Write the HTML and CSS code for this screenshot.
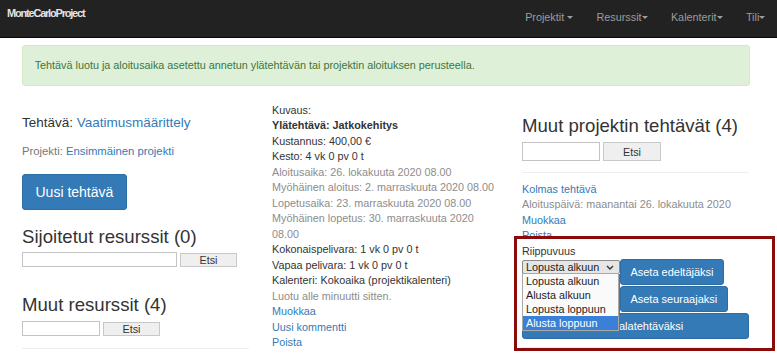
FILE: index.html
```html
<!DOCTYPE html>
<html lang="fi">
<head>
  <meta charset="UTF-8">
  <meta name="viewport" content="width=device-width, initial-scale=1.0">
  <title>Tehtävä: Vaatimusmäärittely</title>
  <link rel="stylesheet" href="styles.css">
</head>
<body>
  <nav class="navbar">
    <a class="brand" href="#">MonteCarloProject</a>
    <ul class="nav">
      <li><a href="#">Projektit <span class="caret"></span></a></li>
      <li><a href="#">Resurssit<span class="caret"></span></a></li>
      <li><a href="#">Kalenterit<span class="caret"></span></a></li>
      <li><a href="#">Tili<span class="caret"></span></a></li>
    </ul>
  </nav>

  <div class="container">
    <div class="alert">Tehtävä luotu ja aloitusaika asetettu annetun ylätehtävän tai projektin aloituksen perusteella.</div>

    <div class="row">
      <div class="col">
        <h4 class="task">Tehtävä: <a href="#">Vaatimusmäärittely</a></h4>
        <p class="project">Projekti: <a href="#">Ensimmäinen projekti</a></p>
        <button class="btn btn-primary btn-lg">Uusi tehtävä</button>

        <h3>Sijoitetut resurssit (0)</h3>
        <form class="search search-sm">
          <input type="text" class="wide">
          <button type="button">Etsi</button>
        </form>

        <h3>Muut resurssit (4)</h3>
        <form class="search search-sm">
          <input type="text">
          <button type="button">Etsi</button>
        </form>
        <hr class="end">
      </div>

      <div class="col details">
        <div>Kuvaus:</div>
        <div><b>Ylätehtävä: Jatkokehitys</b></div>
        <div>Kustannus: 400,00 €</div>
        <div>Kesto: 4 vk 0 pv 0 t</div>
        <div class="muted">Aloitusaika: 26. lokakuuta 2020 08.00</div>
        <div class="muted">Myöhäinen aloitus: 2. marraskuuta 2020 08.00</div>
        <div class="muted">Lopetusaika: 23. marraskuuta 2020 08.00</div>
        <div class="muted">Myöhäinen lopetus: 30. marraskuuta 2020 08.00</div>
        <div>Kokonaispelivara: 1 vk 0 pv 0 t</div>
        <div>Vapaa pelivara: 1 vk 0 pv 0 t</div>
        <div>Kalenteri: Kokoaika (projektikalenteri)</div>
        <div class="muted">Luotu alle minuutti sitten.</div>
        <div><a href="#">Muokkaa</a></div>
        <div><a href="#">Uusi kommentti</a></div>
        <div><a href="#">Poista</a></div>
      </div>

      <div class="col">
        <h3 class="tasks-title">Muut projektin tehtävät (4)</h3>
        <form class="search">
          <input type="text">
          <button type="button">Etsi</button>
        </form>
        <hr class="sep">

        <div class="other-task">
          <div><a href="#">Kolmas tehtävä</a></div>
          <div class="muted">Aloituspäivä: maanantai 26. lokakuuta 2020</div>
          <div><a href="#">Muokkaa</a></div>
          <div><a href="#">Poista</a></div>
        </div>

        <div class="dep">
          <span class="mark"></span>
          <div class="dep-label">Riippuvuus</div>
          <div class="dep-row">
            <select class="dep-select">
              <option>Lopusta alkuun</option>
              <option>Alusta alkuun</option>
              <option>Lopusta loppuun</option>
              <option>Alusta loppuun</option>
            </select>
            <button class="btn btn-primary">Aseta edeltäjäksi</button>
          </div>
          <div class="dep-row">
            <select class="dep-select covered">
              <option>Lopusta alkuun</option>
            </select>
            <button class="btn btn-primary">Aseta seuraajaksi</button>
          </div>
          <div class="dep-row">
            <button class="btn btn-primary btn-block">Aseta alatehtäväksi</button>
          </div>
          <ul class="dep-popup">
            <li>Lopusta alkuun</li>
            <li>Alusta alkuun</li>
            <li>Lopusta loppuun</li>
            <li class="active">Alusta loppuun</li>
          </ul>
          <hr>
        </div>
      </div>
    </div>
  </div>
</body>
</html>
```

FILE: styles.css
```css
html { overflow: hidden; }
body { margin: 0; font-family: "Liberation Sans", Arial, sans-serif; font-size: 10.8px; line-height: 15.5px; color: #333; background: #fff; }
a { color: #337ab7; text-decoration: none; }
hr { border: 0; border-top: 1px solid #eee; margin: 0; }

.navbar { display: flex; justify-content: space-between; height: 37px; background: #222; border-bottom: 1px solid #080808; }
.brand { padding: 6px 0 0 7px; color: #e2e2e2; font-size: 11px; font-weight: bold; letter-spacing: -1.2px; line-height: 15.6px; }
.nav { display: flex; margin: 0; padding: 0; list-style: none; }
.nav a { display: block; padding: 10px 11.7px 0; color: #9d9d9d; line-height: 15.6px; }
.caret { display: inline-block; vertical-align: middle; margin-top: -1px; border-top: 3px solid #9d9d9d; border-left: 3px solid transparent; border-right: 3px solid transparent; }

.container { padding: 7px 27px 0 22px; }
.alert { padding: 11.7px; background: #dff0d8; border: 1px solid #d6e9c6; border-radius: 3px; color: #3c763d; line-height: 15.6px; margin-bottom: 15.6px; }

.row { display: grid; grid-template-columns: 227px 227px 227px; column-gap: 23px; }
.col { min-width: 0; }

h3 { font-size: 18.6px; font-weight: normal; line-height: 20.5px; margin: 16.8px 0 0; }
.tasks-title { margin-top: 14px; }
.task { font-size: 13.5px; font-weight: normal; line-height: 14.85px; margin: 14.5px 0 0; }
.project { font-size: 11.3px; line-height: 15.6px; color: #777; margin: 13.4px 0 0; }

.btn { font-family: inherit; font-size: 11px; line-height: 15.7px; padding: 4.6px 9.4px; border: 1px solid transparent; border-radius: 3px; cursor: pointer; }
.btn-primary { background: #337ab7; border-color: #2e6da4; color: #fff; }
.btn-lg { font-size: 14px; line-height: 18.4px; padding: 7.8px 12.5px; margin-top: 14px; }
.btn-block { display: block; width: 100%; }

.search { display: flex; align-items: center; gap: 3px; margin: 6px 0 0; }
.search input { width: 78px; height: 19px; box-sizing: border-box; border: 1px solid #c3c3c3; padding: 0 3px; font: inherit; }
.search button { width: 58px; height: 19px; box-sizing: border-box; background: #efefef; border: 1px solid #c8c8c8; font-family: inherit; font-size: 10.8px; color: #333; padding: 0; }
.search-sm { margin: 5.2px 0 28px; }
.search-sm input { height: 15px; }
.search-sm input.wide { width: 155px; }
.search-sm button { height: 14px; width: 57px; line-height: 12px; }
.end { margin-top: -16.5px; }

.details { padding-top: 1px; }
.muted { color: #8c8c8c; }

.sep { margin: 10.5px 0 9px; }

.dep { position: relative; }
.dep-label { color: #333; }
.dep-row { display: flex; align-items: flex-start; margin-bottom: 1px; }
.dep-select { appearance: none; -webkit-appearance: none; width: 98px; height: 14px; margin-top: 1px; box-sizing: border-box; padding: 0 0 0 3px; font-family: inherit; font-size: 10.8px; line-height: 12px; color: #222; background: #e6e6e6 url("data:image/svg+xml;utf8,<svg xmlns='http://www.w3.org/2000/svg' width='8' height='5'><path d='M1 1l3 3 3-3' fill='none' stroke='%23333' stroke-width='1.4'/></svg>") no-repeat right 5px center; border: 1px solid #8a8a8a; border-radius: 2px; }
.dep-select.covered { visibility: hidden; }
.dep .btn { height: 26px; }
.dep hr { margin-top: 7.8px; }

.dep-popup { position: absolute; left: 0; top: 29.8px; width: 97px; box-sizing: border-box; margin: 0; padding: 0; list-style: none; background: #fafafa; border: 1px solid #a8a8a8; box-shadow: 1px 1px 0 #6f6f6f; }
.dep-popup li { padding: 0 0 0 3px; height: 14px; line-height: 14px; font-size: 10.8px; color: #222; }
.dep-popup li.active { background: #3a7fd8; color: #fff; }

.mark { position: absolute; top: -7.7px; left: -8px; width: 261px; height: 115px; box-sizing: border-box; border: 3px solid #8b0a0a; z-index: 2; }
```
